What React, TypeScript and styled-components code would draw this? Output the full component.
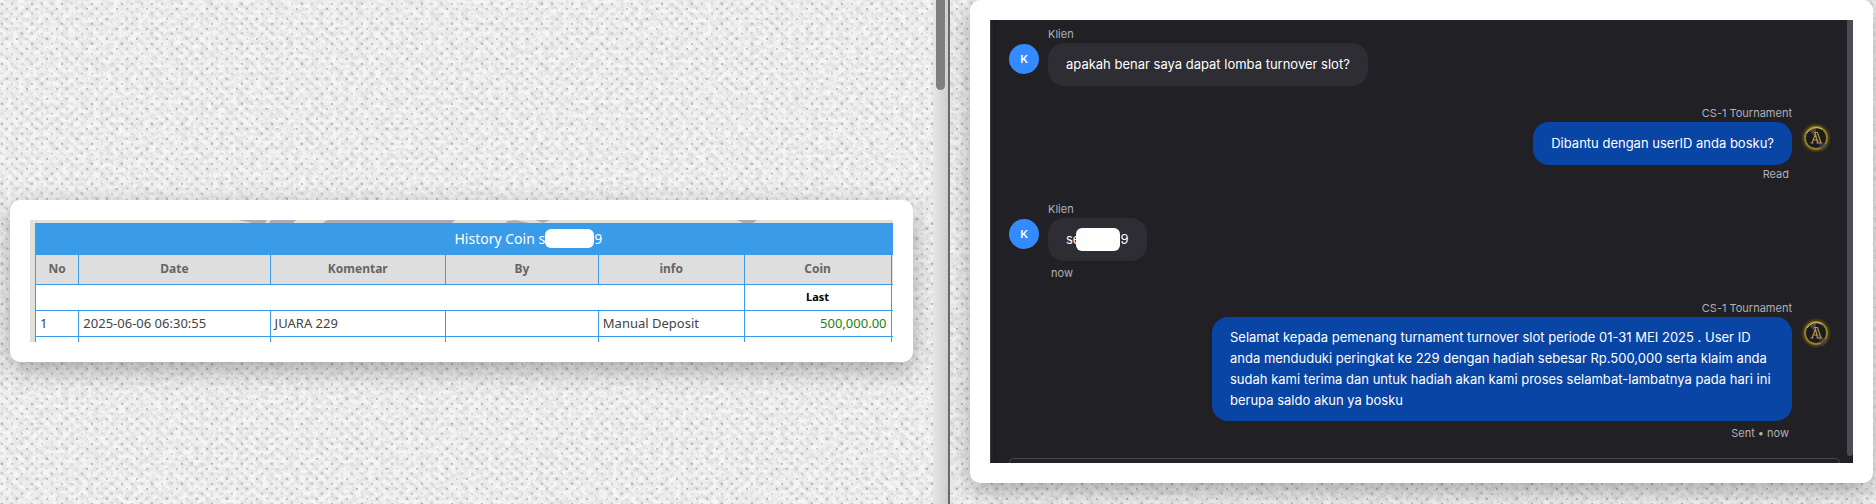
import React from "react";
import styled, { createGlobalStyle } from "styled-components";

const GlobalStyle = createGlobalStyle`
  * { box-sizing: border-box; }
  body { margin: 0; }
`;

const Page = styled.main`
  position: relative;
  display: grid;
  grid-template-columns: minmax(0, 933fr) 17px minmax(0, 926fr);
  min-height: 100vh;
  background: #e2e2e2;
`;

const Texture = styled.svg`
  position: absolute;
  inset: 0;
  width: 100%;
  height: 100%;
`;

const LeftPane = styled.section`
  position: relative;
  display: flex;
  align-items: center;
  padding: 58px 20px 0 10px;
`;

const RightPane = styled.section`
  position: relative;
  overflow: hidden;
  padding: 0 3px 21px 20px;
`;

const ScrollTrack = styled.div`
  position: relative;
  padding: 0 3px;
  background: linear-gradient(90deg, #e6e6e6, #cfcfcf);
  border-right: 2px solid #686868;
`;

const ScrollThumb = styled.div`
  width: 9px;
  height: 90px;
  border-radius: 0 0 5px 5px;
  background: #7f7f7f;
`;

const Card = styled.div`
  width: 100%;
  padding: 20px;
  background: #fff;
  border-radius: 10px;
  box-shadow: 0 8px 24px rgba(0, 0, 0, 0.3);
`;

const HistoryFrame = styled.div`
  overflow: hidden;
  background: #e1e1dc;
  padding-left: 5px;
  font-family: "Noto Sans", "Open Sans", sans-serif;
`;

const MapStrip = styled.svg`
  display: block;
  width: 100%;
  height: 3px;
`;

/* Wider than its frame: the last column runs out of view. */
const HistoryTable = styled.table`
  width: 115%;
  table-layout: fixed;
  border-collapse: collapse;
  background: #fff;
  font-size: 13px;
  line-height: 18px;
  color: #444;
`;

const Title = styled.th`
  height: 31px;
  padding: 0;
  background: #3a9be9;
  border: 1px solid #3a9be9;
  color: #fff;
  font-size: 14px;
  font-weight: 400;
`;

const Head = styled.th`
  height: 30px;
  padding: 0;
  border: 1px solid #3a9be9;
  background: #dedede;
  color: #666;
  font-size: 12px;
`;

const Cell = styled.td<{ $align?: string; $tone?: string; $bold?: boolean }>`
  height: 26px;
  padding: 0 4px;
  border: 1px solid #3a9be9;
  text-align: ${(p) => p.$align ?? "left"};
  color: ${(p) => p.$tone ?? "inherit"};
  font-weight: ${(p) => (p.$bold ? 700 : 400)};
  font-size: ${(p) => (p.$bold ? "11px" : "13px")};
`;

const NextCell = styled.td`
  height: 6px;
  padding: 0;
  border: 1px solid #3a9be9;
  border-bottom: 0;
`;

const Redaction = styled.span<{ $w: number; $h: number; $overlap?: boolean }>`
  display: inline-block;
  vertical-align: -4px;
  width: ${(p) => p.$w}px;
  height: ${(p) => p.$h}px;
  margin-left: ${(p) => (p.$overlap ? "-4px" : "0")};
  border-radius: 6px;
  background: #fff;
`;

const Chat = styled.div`
  display: flex;
  overflow: hidden;
  background: #212025;
  border-left: 1px solid #3a3a44;
  font-family: Inter, "Liberation Sans", sans-serif;
  color: #fff;
`;

const Thread = styled.div`
  flex: 1;
  min-width: 0;
  margin-left: 4px;
  border-left: 1px solid #19191d;
  padding: 6px 16px 0 13px;
  display: flex;
  flex-direction: column;
`;

const ChatBar = styled.div`
  flex: none;
  width: 6px;
  margin-bottom: 7px;
  background: #4d4c56;
  border-radius: 0 0 3px 3px;
`;

const Message = styled.article<{ $own?: boolean }>`
  display: flex;
  flex-direction: ${(p) => (p.$own ? "row-reverse" : "row")};
  gap: 9px;
  margin-bottom: 19px;
`;

const Avatar = styled.div<{ $own?: boolean }>`
  flex: none;
  width: 30px;
  height: 30px;
  margin-top: 18px;
  border-radius: 50%;
  background: ${(p) => (p.$own ? "transparent" : "#338bff")};
  font-size: 11px;
  font-weight: 600;
  line-height: 30px;
  text-align: center;
`;

const Body = styled.div<{ $own?: boolean }>`
  display: flex;
  flex-direction: column;
  align-items: ${(p) => (p.$own ? "flex-end" : "flex-start")};
`;

const Meta = styled.span`
  font-size: 11px;
  line-height: 16px;
  color: #b0b0b8;
`;

const Status = styled(Meta)<{ $timed?: boolean }>`
  margin-top: ${(p) => (p.$timed ? "4px" : "1px")};
  padding: 0 3px;
`;

const Bubble = styled.p<{ $own?: boolean }>`
  display: flex;
  align-items: center;
  min-height: 43px;
  max-width: 580px;
  margin: 1px 0 0;
  padding: 10px 18px;
  border-radius: 16px;
  background: ${(p) => (p.$own ? "#0945a5" : "#2e2d33")};
  font-size: 13px;
  line-height: 21px;
`;

const Composer = styled.div`
  height: 5px;
  margin: -2px -9px 0 0;
  border: 1px solid #47474c;
  border-bottom: 0;
  border-radius: 16px 16px 0 0;
`;

const Emblem = () => (
  <svg width="30" height="30" viewBox="0 0 30 30" aria-hidden="true">
    <defs>
      <radialGradient id="halo">
        <stop offset=".7" stopColor="#5c5016" />
        <stop offset="1" stopColor="#29261c" />
      </radialGradient>
    </defs>
    <circle cx="15" cy="15" r="15" fill="url(#halo)" />
    <circle cx="15" cy="15" r="11" fill="#1c1b1f" stroke="#94812b" strokeWidth="1.800" />
    <path d="M15 15L8 7A11 11 0 0 1 15 4Z" fill="#66645c" opacity=".6" />
    <path d="M15 15L27 23A14 14 0 0 1 21 28Z" fill="#44434a" opacity=".7" />
    <path d="M6 10A11 11 0 0 1 21 6" fill="none" stroke="#d1bb57" strokeWidth="1" />
    <path d="M13 9.500H16.500L20 20H16.500L14.500 11L11 20M9.500 20H12.500M15.500 20H21M12.500 17H17" fill="none" stroke="#b58f4c" strokeWidth="1.200" />
  </svg>
);

const Weave = () => (
  <Texture aria-hidden="true">
    <defs>
      <pattern id="weave" width="10" height="10" patternUnits="userSpaceOnUse">
        <path d="M0 3H3M5 8H8" stroke="#cccccc" strokeWidth="2" opacity=".6" />
        <path d="M3 1L8 6M-2 6L3 11M8 -4L13 1" stroke="#f4f4f4" strokeWidth="1.500" opacity=".5" />
      </pattern>
      <pattern id="holes" width="30" height="20" patternUnits="userSpaceOnUse">
        <g fill="#777777">
          <path d="M1 3H3V5H1ZM26 8H28V10H26ZM16 18H18V20H16Z" opacity=".38" />
          <path d="M11 3H13V5H11ZM6 8H8V10H6ZM21 13H23V15H21ZM6 18H8V20H6Z" opacity=".25" />
          <path d="M21 3H23V5H21ZM16 8H18V10H16ZM1 13H3V15H1ZM11 13H13V15H11ZM26 18H28V20H26Z" opacity=".15" />
        </g>
      </pattern>
      <filter id="grain" x="0" y="0" width="100%" height="100%">
        <feTurbulence type="fractalNoise" baseFrequency="0.16 0.22" numOctaves="3" seed="4" />
        <feColorMatrix values="0 0 0 0 .92  0 0 0 0 .92  0 0 0 0 .92  2.600 0 0 0 -.8" />
      </filter>
    </defs>
    <rect width="100%" height="100%" fill="url(#weave)" />
    <rect width="100%" height="100%" filter="url(#grain)" />
    <rect width="100%" height="100%" fill="url(#holes)" />
  </Texture>
);

type Msg = { own?: boolean; status?: string; timed?: boolean; text: React.ReactNode };

const messages: Msg[] = [
  { text: "apakah benar saya dapat lomba turnover slot?" },
  { own: true, status: "Read", text: "Dibantu dengan userID anda bosku?" },
  { status: "now", timed: true, text: <>se<Redaction $w={44} $h={23} $overlap />9</> },
  {
    own: true,
    status: "Sent • now",
    timed: true,
    text: "Selamat kepada pemenang turnament turnover slot periode 01-31 MEI 2025 . User ID anda menduduki peringkat ke 229 dengan hadiah sebesar Rp.500,000 serta klaim anda sudah kami terima dan untuk hadiah akan kami proses selambat-lambatnya pada hari ini berupa saldo akun ya bosku",
  },
];

const columns = ["No", "Date", "Komentar", "By", "info", "Coin"];

const Column = styled.col<{ $w: number }>`
  width: ${(p) => p.$w}%;
`;

export default function App() {
  return (
    <Page>
      <GlobalStyle />
      <Weave />
      <LeftPane>
        <Card>
          <HistoryFrame>
            <MapStrip viewBox="0 0 858 3" preserveAspectRatio="none" aria-hidden="true">
              <path d="M203 0H232L230 3H218ZM236 0H261L258 3H234ZM292 0H420L417 3H288ZM472 1L480 0L494 3H471ZM500 0H515L508 3ZM702 0H722L718 3H708Z" fill="#a9afb8" />
            </MapStrip>
            <HistoryTable>
              <colgroup>
                {[4.4, 19.4, 17.8, 15.5, 14.8, 14.9, 13.2].map((w, i) => <Column key={i} $w={w} />)}
              </colgroup>
              <thead>
                <tr>
                  <Title colSpan={7}>History Coin s<Redaction $w={49} $h={19} />9</Title>
                </tr>
                <tr>
                  {columns.map((c) => <Head key={c}>{c}</Head>)}
                  <Head />
                </tr>
              </thead>
              <tbody>
                <tr>
                  <Cell colSpan={5} />
                  <Cell $align="center" $tone="#000" $bold>Last</Cell>
                  <Cell />
                </tr>
                <tr>
                  <Cell>1</Cell>
                  <Cell>2025-06-06 06:30:55</Cell>
                  <Cell>JUARA 229</Cell>
                  <Cell />
                  <Cell>Manual Deposit</Cell>
                  <Cell $align="right" $tone="#16870f">500,000.00</Cell>
                  <Cell />
                </tr>
                <tr>
                  {columns.map((c) => <NextCell key={c} />)}
                  <NextCell />
                </tr>
              </tbody>
            </HistoryTable>
          </HistoryFrame>
        </Card>
      </LeftPane>
      <ScrollTrack>
        <ScrollThumb />
      </ScrollTrack>
      <RightPane>
        <Card>
          <Chat>
            <Thread>
              {messages.map((m, i) => (
                <Message key={i} $own={m.own}>
                  <Avatar $own={m.own}>{m.own ? <Emblem /> : "K"}</Avatar>
                  <Body $own={m.own}>
                    <Meta>{m.own ? "CS-1 Tournament" : "Klien"}</Meta>
                    <Bubble $own={m.own}>{m.text}</Bubble>
                    {m.status && <Status $timed={m.timed}>{m.status}</Status>}
                  </Body>
                </Message>
              ))}
              <Composer />
            </Thread>
            <ChatBar />
          </Chat>
        </Card>
      </RightPane>
    </Page>
  );
}
